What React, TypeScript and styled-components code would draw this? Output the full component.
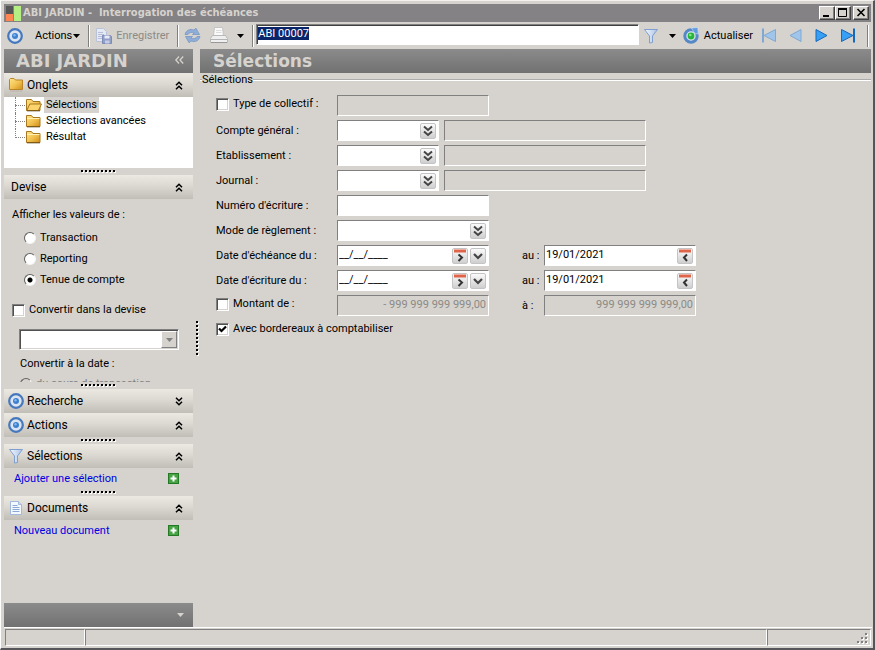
import React, { useEffect, useRef } from "react";
import styled, { createGlobalStyle, css } from "styled-components";

const face = "#d6d3ce";
const shadow = "#808080";
const uiFont = `"Roboto", "Liberation Sans", sans-serif`;
const titleFont = `"DejaVu Sans", Verdana, sans-serif`;
const captionFont = `"DejaVu Sans Condensed", "DejaVu Sans", sans-serif`;

const GlobalStyle = createGlobalStyle`
  *, *::before, *::after { box-sizing: border-box; }
  body { margin: 0; background: ${face}; }
  body, button, input, select {
    font-family: ${uiFont};
    font-size: 11px;
    line-height: 14px;
    color: #000;
  }
  button { border: 0; background: none; padding: 0; }
`;

const Window = styled.div`
  display: flex;
  flex-direction: column;
  height: 100vh;
  min-height: 600px;
  padding: 2px 1px 1px 2px;
  background: ${face};
  border: solid;
  border-width: 1px 2px 2px 1px;
  border-color: #f4f2ee #55555a #55555a #fff;
  overflow: hidden;
`;

const TitleBar = styled.header`
  display: flex;
  align-items: center;
  flex: none;
  height: 18px;
  margin: 1px 1px 0;
  padding-right: 2px;
  background: #848284;
  color: ${face};
`;

const WindowTitle = styled.h1`
  flex: 1;
  margin: 0 0 0 2px;
  font: bold 11px/16px ${captionFont};
  white-space: pre;
`;

const CaptionButton = styled.button<{ $gap?: boolean }>`
  display: flex;
  width: 16px;
  height: 14px;
  margin-left: ${(p) => (p.$gap ? "2px" : "0")};
  background: ${face};
  border: 1px solid;
  border-color: #fff #404040 #404040 #fff;
  box-shadow: inset -1px -1px ${shadow};
`;

const Toolbar = styled.div`
  display: flex;
  align-items: center;
  flex: none;
  height: 27px;
  padding: 0 3px 0 4px;
`;

const ToolButton = styled.button<{ $left?: number; $gap?: number }>`
  display: flex;
  align-items: center;
  flex: none;
  gap: ${(p) => p.$gap ?? 4}px;
  margin-left: ${(p) => p.$left ?? 0}px;
  &:disabled { color: #8c8a86; }
`;

const Separator = styled.span<{ $left?: number }>`
  flex: none;
  width: 2px;
  height: 22px;
  margin-left: ${(p) => p.$left ?? 8}px;
  border-left: 1px solid ${shadow};
  border-right: 1px solid #fff;
`;

const sunken = css`
  border: 1px solid;
  border-color: ${shadow} #fff #fff ${shadow};
`;

const SearchInput = styled.input`
  flex: 1;
  min-width: 0;
  height: 21px;
  margin: 0 4px 2px 2px;
  padding: 0 1px 3px;
  ${sunken}
  box-shadow: inset 1px 1px #404040;
  border-radius: 0;
  outline: 0;
  background: #fff;
  &::selection { background: #0a246a; color: #fff; }
`;

const Body = styled.div`
  display: flex;
  flex: 1;
  min-height: 0;
`;

const Sidebar = styled.aside`
  display: flex;
  flex-direction: column;
  flex: none;
  width: 190px;
  padding-left: 1px;
`;

const Grip = styled.div`
  display: flex;
  align-items: center;
  justify-content: flex-end;
  flex: none;
  width: 7px;
  padding-right: 1px;
`;

const Banner = styled.div<{ $start: number }>`
  display: flex;
  align-items: center;
  justify-content: space-between;
  flex: none;
  height: 24px;
  padding: 0 9px 0 ${(p) => p.$start}px;
  background: linear-gradient(#8b8b8b, #717171);
  color: ${face};
`;

const BannerTitle = styled.h2<{ $small?: boolean }>`
  margin: 0;
  font: bold ${(p) => (p.$small ? 17 : 18)}px/24px ${titleFont};
`;

const PanelHead = styled.button`
  display: flex;
  align-items: center;
  flex: none;
  gap: 3px;
  width: 100%;
  height: 24px;
  padding: 0 10px 0 4px;
  background: linear-gradient(#ece8e2, #dcd8d2 45%, #c1bdb7);
  font-size: 12px;
  text-align: left;
`;

const PanelName = styled.span<{ $indent?: boolean }>`
  flex: 1;
  padding-left: ${(p) => (p.$indent ? "3px" : "0")};
`;

const Splitter = styled.div`
  display: flex;
  align-items: center;
  justify-content: center;
  flex: none;
  height: 7px;
`;

const Tree = styled.ul`
  flex: none;
  height: 71px;
  margin: 0;
  padding: 0 0 0 11px;
  list-style: none;
  background: #fff;
`;

const TreeItem = styled.li<{ $last?: boolean }>`
  position: relative;
  height: 16px;
  padding-left: 11px;
  &::before {
    content: "";
    position: absolute;
    left: 0;
    top: 0;
    height: ${(p) => (p.$last ? "9px" : "16px")};
    border-left: 1px dotted ${shadow};
  }
  &::after {
    content: "";
    position: absolute;
    left: 0;
    top: 8px;
    width: 10px;
    border-top: 1px dotted ${shadow};
  }
`;

const TreeLink = styled.a<{ $active?: boolean }>`
  display: flex;
  align-items: center;
  gap: 2px;
  color: #000;
  text-decoration: none;
  span {
    padding: 1px 2px;
    background: ${(p) => (p.$active ? face : "none")};
  }
`;

const CurrencyPanel = styled.div`
  display: flex;
  flex-direction: column;
  flex: none;
  height: 183px;
  padding: 9px 14px 0 8px;
  overflow: hidden;
`;

const Options = styled.div`
  display: flex;
  flex-direction: column;
  gap: 7px;
  padding: 9px 0 16px 12px;
`;

const Choice = styled.label<{ $muted?: boolean }>`
  display: flex;
  align-items: center;
  gap: 4px;
  white-space: nowrap;
  color: ${(p) => (p.$muted ? shadow : "#000")};
`;

const Radio = styled.input.attrs({ type: "radio" })`
  appearance: none;
  flex: none;
  width: 12px;
  height: 12px;
  margin: 0;
  border: 1px solid;
  border-color: #606060 #f4f4f4 #f4f4f4 #606060;
  border-radius: 50%;
  background: #fff;
  &:checked { background: radial-gradient(circle, #000 2px, #fff 3px); }
  &:disabled { background: ${face}; }
`;

const CheckWrap = styled.span`
  display: inline-grid;
  flex: none;
  > * { grid-area: 1 / 1; }
  svg { pointer-events: none; visibility: hidden; }
  input:checked + svg { visibility: visible; }
`;

const CheckBox = styled.input.attrs({ type: "checkbox" })`
  appearance: none;
  width: 13px;
  height: 13px;
  margin: 0;
  background: #fff;
  ${sunken}
  box-shadow: inset 1px 1px #505050, inset -1px -1px ${face};
`;

const CurrencyBox = styled.div`
  display: grid;
  flex: none;
  height: 21px;
  margin: 12px 0 7px 7px;
  > * { grid-area: 1 / 1; }
`;

const CurrencySelect = styled.select`
  appearance: none;
  width: 100%;
  padding: 0 20px 0 3px;
  ${sunken}
  border-radius: 0;
  box-shadow: inset 1px 1px #505050, inset -1px -1px ${face};
  background: #fff;
`;

const DropFace = styled.span`
  display: grid;
  place-items: center;
  justify-self: end;
  width: 16px;
  margin: 2px;
  background: ${face};
  border: 1px solid;
  border-color: #fff ${shadow} ${shadow} #fff;
  pointer-events: none;
`;

const SubLabel = styled.div`
  padding: 0 0 6px 8px;
`;

const LinkRow = styled.div`
  display: flex;
  align-items: center;
  justify-content: space-between;
  flex: none;
  height: 21px;
  padding: 0 14px 0 10px;
  a { color: #0000e0; text-decoration: none; }
`;

const Fill = styled.div`
  flex: 1;
`;

const Main = styled.main`
  flex: 1;
  min-width: 0;
  padding-right: 1px;
  overflow: hidden;
`;

const FormGroup = styled.fieldset`
  display: block;
  min-width: 0;
  margin: 0;
  padding: 8px 0 0 16px;
  border: 0;
  border-top: 2px groove #fff;
  legend {
    margin-left: -14px;
    padding: 0;
  }
`;

const Rows = styled.div`
  display: flex;
  flex-direction: column;
  gap: 4px;
`;

const Row = styled.div`
  display: flex;
  align-items: center;
  height: 21px;
`;

const RowLabel = styled.div<{ $tick?: boolean }>`
  flex: none;
  width: 121px;
  padding-top: ${(p) => (p.$tick ? "0" : "1px")};
  padding-bottom: ${(p) => (p.$tick ? "3px" : "0")};
  white-space: nowrap;
`;

const ToLabel = styled.label`
  flex: none;
  width: 22px;
  margin-left: 33px;
  padding-top: 1px;
`;

const FieldBox = styled.div<{ $w: number; $off?: boolean; $left?: number }>`
  display: flex;
  align-items: center;
  gap: 2px;
  flex: none;
  width: ${(p) => p.$w}px;
  height: 21px;
  margin-left: ${(p) => p.$left ?? 0}px;
  padding-right: 2px;
  ${sunken}
  background: ${(p) => (p.$off ? face : "#fff")};
`;

const FieldInput = styled.input<{ $right?: boolean }>`
  flex: 1;
  min-width: 0;
  height: 19px;
  padding: 0 0 3px 1px;
  border: 0;
  outline: 0;
  background: none;
  text-align: ${(p) => (p.$right ? "right" : "left")};
  &:disabled { color: #8c8a86; }
`;

const MiniButton = styled.button`
  display: grid;
  place-items: center;
  flex: none;
  width: 16px;
  height: 16px;
  border: 1px solid #c4c4c4;
  border-radius: 2px;
  background: linear-gradient(#fafafa, #cfcfcf);
`;

const StatusBar = styled.footer`
  display: flex;
  flex: none;
  height: 20px;
  margin-left: 1px;
  padding: 1px 1px 1px 1px;
  border-top: 1px solid #fff;
`;

const StatusCell = styled.div<{ $w?: number }>`
  display: flex;
  align-items: flex-end;
  justify-content: flex-end;
  flex: ${(p) => (p.$w ? `0 0 ${p.$w}px` : "1")};
  ${sunken}
`;

const Target = () => (
  <svg width="16" height="16" viewBox="0 0 16 16" aria-hidden="true">
    <circle cx="8" cy="8" r="6.8" fill="#dbe4f0" stroke="#4578bd" strokeWidth="2.2" />
    <circle cx="8" cy="8" r="3" fill="#3c80d0" />
    <circle cx="7.5" cy="7.3" r="1.2" fill="#7fb4ee" />
  </svg>
);

const Caret = ({ color = "#000" }: { color?: string }) => (
  <svg width="7" height="4" viewBox="0 0 7 4" aria-hidden="true">
    <path d="M0 0h7L3.5 4z" fill={color} />
  </svg>
);

const DoubleChevron = ({ down = false }: { down?: boolean }) => (
  <svg width="8" height="9" viewBox="0 0 8 9" aria-hidden="true" fill="none" stroke="#000" strokeWidth="1.5">
    {down ? <path d="M1 .7l3 3 3-3M1 4.7l3 3 3-3" /> : <path d="M1 4.3l3-3 3 3M1 8.3l3-3 3 3" />}
  </svg>
);

const FolderGradient = () => (
  <linearGradient id="folderFill" x1="0" y1="0" x2="1" y2="1">
    <stop offset="0" stopColor="#ffe48a" />
    <stop offset=".5" stopColor="#f3c352" />
    <stop offset="1" stopColor="#cf8d18" />
  </linearGradient>
);

const Folder = ({ open = false }: { open?: boolean }) => (
  <svg width="16" height="14" viewBox="0 0 16 14" aria-hidden="true">
    <defs><FolderGradient /></defs>
    <path d="M.5 12.500v-11h5l1.500 2h7v9z" fill="url(#folderFill)" stroke="#a8781f" />
    {open ? (
      <path d="M.8 12.500l3-6.500h11.700l-3.200 6.500z" fill="#fbd56c" stroke="#a8781f" />
    ) : (
      <path d="M1 4.500h12.500" stroke="#fff0b8" />
    )}
    <path d="M1 12.900h13" stroke="#4c340c" strokeOpacity=".7" />
  </svg>
);

const TabFolder = () => (
  <svg width="16" height="16" viewBox="0 0 16 16" aria-hidden="true">
    <defs><FolderGradient /></defs>
    <path d="M1.500 12.500v-10l1-1H6l1.500 1.500H14.500v9.500z" fill="url(#folderFill)" stroke="#b98528" />
    <path d="M2 14h12.500" stroke="#a39a89" strokeOpacity=".5" />
  </svg>
);

const Funnel = () => (
  <svg width="16" height="16" viewBox="0 0 16 16" aria-hidden="true">
    <defs>
      <linearGradient id="funnelFill">
        <stop offset="0" stopColor="#f5f9ff" />
        <stop offset="1" stopColor="#a9c2e6" />
      </linearGradient>
    </defs>
    <path d="M1.500 1.500h13L9.500 8v6.500l-3 .5V8z" fill="url(#funnelFill)" stroke="#7f9fd0" />
  </svg>
);

const DocIcon = () => (
  <svg width="16" height="16" viewBox="0 0 16 16" aria-hidden="true">
    <path d="M2.500 1.500h8l3 3v10h-11z" fill="#f4f8ff" stroke="#a3b9dc" />
    <path d="M10.500 1.500v3h3" fill="#cbdaf2" stroke="#a3b9dc" />
    <path d="M4.500 5.500h5M4.500 7.500h7M4.500 9.500h7M4.500 11.500h7" stroke="#8ba7d6" />
  </svg>
);

const SaveIcon = () => (
  <svg width="16" height="16" viewBox="0 0 16 16" aria-hidden="true">
    <path d="M.5.5h7l3 3v10H.5z" fill="#e5e9f3" stroke="#b9c2d6" />
    <path d="M2 4.500h5M2 6.500h6M2 8.500h4M2 10.500h4" stroke="#b5c0d8" />
    <path d="M6.500 7.500h8l1 1v7h-9z" fill="#929fc8" stroke="#7d8bb9" />
    <path d="M8.500 7.500h5v3h-5z" fill="#e8ebf4" />
    <path d="M9 12.500h4.500v3H9z" fill="#c6cde2" />
  </svg>
);

const SyncIcon = () => (
  <svg width="17" height="17" viewBox="0 0 17 17" aria-hidden="true">
    <path d="M1 7.500C2 3 6 1.500 10 3L12 1.200 15.500 7.500H8.500l1.600-1.700C7.500 4.800 5 5.500 4 7.500z" fill="#8fadd6" stroke="#6f92c4" strokeWidth=".7" />
    <path d="M16 9.500c-1 4.500-5 6-9 4.500L5 15.800 1.500 9.500h7l-1.600 1.700c2.600 1 5.100.300 6.100-1.700z" fill="#8fadd6" stroke="#6f92c4" strokeWidth=".7" />
  </svg>
);

const Printer = () => (
  <svg width="18" height="17" viewBox="0 0 18 17" aria-hidden="true">
    <path d="M4.500.500h8l1 8h-10z" fill="#fafafa" stroke="#c4c4c4" />
    <path d="M6 3.500h5.500M6 5.500h5.500" stroke="#dcdcdc" />
    <path d="M2.500 8.500h13l2 3v4H.500v-4z" fill="#efefef" stroke="#b8b8b8" />
    <path d="M1 12.500h16" stroke="#b4b4b4" />
    <path d="M1 15.500h16" stroke="#989898" />
  </svg>
);

const Reload = () => (
  <svg width="17" height="17" viewBox="0 0 17 17" aria-hidden="true">
    <circle cx="8" cy="9" r="6.200" fill="#dde6ee" stroke="#5688c6" strokeWidth="3" />
    <path d="M8.500 1L14.800.500 15.300 7 12.500 6.500 10.500 4.500z" fill="#5f9be0" stroke="#d6e4f4" strokeWidth=".6" />
    <circle cx="8" cy="9" r="3.400" fill="#25b53a" />
    <circle cx="7.300" cy="8" r="1.300" fill="#86e887" />
  </svg>
);

const NavArrow = ({ left, bar }: { left?: boolean; bar?: boolean }) => {
  const fill = left ? "#9fc5eb" : "#38a0f4";
  const edge = left ? "#80a8d2" : "#1767bb";
  return (
    <svg width={bar ? 16 : 13} height="15" viewBox={bar ? "0 0 16 15" : "0 0 13 15"} aria-hidden="true">
      {left ? (
        <path d={bar ? "M14.500 1.500v12L3 7.500z" : "M12 1.500v12l-11-6z"} fill={fill} stroke={edge} />
      ) : (
        <path d={bar ? "M1.500 1.500v12L13 7.500z" : "M1 1.500v12l11-6z"} fill={fill} stroke={edge} />
      )}
      {bar && <path d={left ? "M2 .500v14" : "M14 .500v14"} stroke={edge} strokeWidth="2" />}
    </svg>
  );
};

const AddIcon = () => (
  <svg width="11" height="11" viewBox="0 0 11 11" aria-hidden="true">
    <rect x=".5" y=".5" width="10" height="10" fill="#46a342" stroke="#247826" />
    <path d="M5.500 2.500v6M2.500 5.500h6" stroke="#fff" strokeWidth="2" />
  </svg>
);

const Dots = ({ vertical = false }: { vertical?: boolean }) => (
  <svg width={vertical ? 3 : 35} height={vertical ? 35 : 3} aria-hidden="true">
    {Array.from({ length: 9 }, (_, i) => (
      <g key={i}>
        <rect x={vertical ? 1 : i * 4 + 1} y={vertical ? i * 4 + 1 : 1} width="2" height="2" fill="#fff" />
        <rect x={vertical ? 0 : i * 4} y={vertical ? i * 4 : 0} width="2" height="2" fill="#000" />
      </g>
    ))}
  </svg>
);

const PickIcon = () => (
  <svg width="12" height="12" viewBox="0 0 12 12" aria-hidden="true" fill="none" stroke="#444" strokeWidth="2">
    <path d="M2 1.500l4 3.500 4-3.500M2 6.500L6 10l4-3.500" />
  </svg>
);

const DownIcon = () => (
  <svg width="12" height="12" viewBox="0 0 12 12" aria-hidden="true" fill="none" stroke="#444" strokeWidth="2.200">
    <path d="M2 4l4 4 4-4" />
  </svg>
);

const DayIcon = ({ back = false }: { back?: boolean }) => (
  <svg width="14" height="14" viewBox="0 0 14 14" aria-hidden="true" fill="none">
    <path d="M1 2h12" stroke="#e0644a" strokeWidth="3" />
    <path d={back ? "M9 5.500L6 8.500l3 3.500" : "M5.500 5.500L9 8.500 5.500 12"} stroke="#333" strokeWidth="2" />
  </svg>
);

const Check = ({ id, on = false }: { id: string; on?: boolean }) => (
  <CheckWrap>
    <CheckBox id={id} defaultChecked={on} />
    <svg width="13" height="13" viewBox="0 0 13 13" aria-hidden="true">
      <path d="M3 5.500l2.500 2.500L10 3.500" fill="none" stroke="#000" strokeWidth="2.200" />
    </svg>
  </CheckWrap>
);

const Panel = ({ icon, name, down }: { icon?: React.ReactNode; name: string; down?: boolean }) => (
  <PanelHead type="button" aria-expanded={!down}>
    {icon}
    <PanelName $indent={!icon}>{name}</PanelName>
    <DoubleChevron down={down} />
  </PanelHead>
);

const LookupRow = ({ id, label }: { id: string; label: string }) => (
  <Row>
    <RowLabel><label htmlFor={id}>{label}</label></RowLabel>
    <FieldBox $w={102}>
      <FieldInput id={id} />
      <MiniButton type="button" aria-label="Rechercher"><PickIcon /></MiniButton>
    </FieldBox>
    <FieldBox $w={202} $left={5} $off>
      <FieldInput disabled aria-label={label} />
    </FieldBox>
  </Row>
);

const DateRow = ({ id, label }: { id: string; label: string }) => (
  <Row>
    <RowLabel><label htmlFor={id}>{label}</label></RowLabel>
    <FieldBox $w={152}>
      <FieldInput id={id} defaultValue="__/__/____" />
      <MiniButton type="button" aria-label="Jour suivant"><DayIcon /></MiniButton>
      <MiniButton type="button" aria-label="Calendrier"><DownIcon /></MiniButton>
    </FieldBox>
    <ToLabel htmlFor={`${id}-au`}>au :</ToLabel>
    <FieldBox $w={152}>
      <FieldInput id={`${id}-au`} defaultValue="19/01/2021" />
      <MiniButton type="button" aria-label="Jour précédent"><DayIcon back /></MiniButton>
    </FieldBox>
  </Row>
);

export default function App() {
  const search = useRef<HTMLInputElement>(null);
  useEffect(() => {
    search.current?.focus();
    search.current?.select();
  }, []);

  return (
    <Window>
      <GlobalStyle />
      <TitleBar>
        <svg width="17" height="17" viewBox="0 0 17 17" aria-hidden="true">
          <path d="M2 1h7v8H2z" fill="#555" />
          <path d="M2 9h7v7H2z" fill="#ff8552" />
          <path d="M10 1h7v15h-7z" fill="#b5ef84" />
        </svg>
        <WindowTitle>ABI JARDIN -  Interrogation des échéances</WindowTitle>
        <CaptionButton type="button" aria-label="Réduire">
          <svg width="14" height="12"><path d="M3 9h6" stroke="#000" strokeWidth="2" /></svg>
        </CaptionButton>
        <CaptionButton type="button" aria-label="Agrandir">
          <svg width="14" height="12"><path d="M2.500 2v7.500h8V2" fill="none" stroke="#000" /><path d="M2 2h9" stroke="#000" strokeWidth="2" /></svg>
        </CaptionButton>
        <CaptionButton type="button" aria-label="Fermer" $gap>
          <svg width="14" height="12"><path d="M3.500 2l7 7M10.500 2l-7 7" stroke="#000" strokeWidth="1.600" /></svg>
        </CaptionButton>
      </TitleBar>

      <Toolbar>
        <ToolButton type="button" aria-label="Menu"><Target /></ToolButton>
        <ToolButton type="button" $left={12} $gap={1}>Actions<Caret /></ToolButton>
        <Separator />
        <ToolButton type="button" disabled $left={6}><SaveIcon />Enregistrer</ToolButton>
        <Separator />
        <ToolButton type="button" aria-label="Synchroniser" $left={5}><SyncIcon /></ToolButton>
        <ToolButton type="button" aria-label="Imprimer" $left={9} $gap={9}><Printer /><Caret /></ToolButton>
        <Separator />
        <SearchInput ref={search} defaultValue="ABI 00007" aria-label="Compte" />
        <ToolButton type="button" aria-label="Filtrer" $gap={10}><Funnel /><Caret /></ToolButton>
        <ToolButton type="button" $left={7}><Reload />Actualiser</ToolButton>
        <ToolButton type="button" aria-label="Premier" $left={8}><NavArrow left bar /></ToolButton>
        <ToolButton type="button" aria-label="Précédent" $left={12}><NavArrow left /></ToolButton>
        <ToolButton type="button" aria-label="Suivant" $left={13}><NavArrow /></ToolButton>
        <ToolButton type="button" aria-label="Dernier" $left={12}><NavArrow bar /></ToolButton>
        <Separator $left={11} />
      </Toolbar>

      <Body>
        <Sidebar>
          <Banner $start={12}>
            <BannerTitle>ABI JARDIN</BannerTitle>
            <button type="button" aria-label="Replier">
              <svg width="9" height="8" viewBox="0 0 9 8" fill="none" stroke={face} strokeWidth="1.300">
                <path d="M4 .500L.800 4 4 7.500M8.200.500L5 4l3.200 3.500" />
              </svg>
            </button>
          </Banner>

          <Panel icon={<TabFolder />} name="Onglets" />
          <Tree>
            <TreeItem><TreeLink href="#selections" $active><Folder open /><span>Sélections</span></TreeLink></TreeItem>
            <TreeItem><TreeLink href="#avancees"><Folder /><span>Sélections avancées</span></TreeLink></TreeItem>
            <TreeItem $last><TreeLink href="#resultat"><Folder /><span>Résultat</span></TreeLink></TreeItem>
          </Tree>
          <Splitter><Dots /></Splitter>

          <Panel name="Devise" />
          <CurrencyPanel>
            <div>Afficher les valeurs de :</div>
            <Options>
              <Choice><Radio name="valeurs" />Transaction</Choice>
              <Choice><Radio name="valeurs" />Reporting</Choice>
              <Choice><Radio name="valeurs" defaultChecked />Tenue de compte</Choice>
            </Options>
            <Choice htmlFor="convertir"><Check id="convertir" />Convertir dans la devise</Choice>
            <CurrencyBox>
              <CurrencySelect aria-label="Devise de conversion" />
              <DropFace><Caret color={shadow} /></DropFace>
            </CurrencyBox>
            <SubLabel>Convertir à la date :</SubLabel>
            <SubLabel>
              <Choice $muted><Radio name="date" disabled />du cours de transaction</Choice>
            </SubLabel>
          </CurrencyPanel>
          <Splitter><Dots /></Splitter>

          <Panel icon={<Target />} name="Recherche" down />
          <Panel icon={<Target />} name="Actions" />
          <Splitter><Dots /></Splitter>

          <Panel icon={<Funnel />} name="Sélections" />
          <LinkRow><a href="#ajouter">Ajouter une sélection</a><AddIcon /></LinkRow>
          <Splitter><Dots /></Splitter>

          <Panel icon={<DocIcon />} name="Documents" />
          <LinkRow><a href="#nouveau">Nouveau document</a><AddIcon /></LinkRow>
          <Fill />
          <Banner $start={12}>
            <span />
            <Caret color={face} />
          </Banner>
        </Sidebar>

        <Grip><Dots vertical /></Grip>

        <Main>
          <Banner $start={13}><BannerTitle $small>Sélections</BannerTitle></Banner>
          <FormGroup>
            <legend>Sélections</legend>
            <Rows>
              <Row>
                <RowLabel $tick><Choice htmlFor="collectif"><Check id="collectif" />Type de collectif :</Choice></RowLabel>
                <FieldBox $w={152} $off><FieldInput disabled aria-label="Type de collectif" /></FieldBox>
              </Row>
              <LookupRow id="compte" label="Compte général :" />
              <LookupRow id="etablissement" label="Etablissement :" />
              <LookupRow id="journal" label="Journal :" />
              <Row>
                <RowLabel><label htmlFor="numero">Numéro d'écriture :</label></RowLabel>
                <FieldBox $w={152}><FieldInput id="numero" /></FieldBox>
              </Row>
              <Row>
                <RowLabel><label htmlFor="reglement">Mode de règlement :</label></RowLabel>
                <FieldBox $w={152}>
                  <FieldInput id="reglement" />
                  <MiniButton type="button" aria-label="Rechercher"><PickIcon /></MiniButton>
                </FieldBox>
              </Row>
              <DateRow id="echeance" label="Date d'échéance du :" />
              <DateRow id="ecriture" label="Date d'écriture du :" />
              <Row>
                <RowLabel $tick><Choice htmlFor="montant"><Check id="montant" />Montant de :</Choice></RowLabel>
                <FieldBox $w={152} $off>
                  <FieldInput $right disabled aria-label="Montant minimum" defaultValue="- 999 999 999 999,00" />
                </FieldBox>
                <ToLabel htmlFor="montant-max">à :</ToLabel>
                <FieldBox $w={152} $off>
                  <FieldInput id="montant-max" $right disabled defaultValue="999 999 999 999,00" />
                </FieldBox>
              </Row>
              <Row>
                <RowLabel $tick><Choice htmlFor="bordereaux"><Check id="bordereaux" on />Avec bordereaux à comptabiliser</Choice></RowLabel>
              </Row>
            </Rows>
          </FormGroup>
        </Main>
      </Body>

      <StatusBar>
        <StatusCell $w={80} />
        <StatusCell />
        <StatusCell $w={104}>
          <svg width="13" height="12" viewBox="0 0 13 12" aria-hidden="true">
            {[[8, 0], [4, 4], [8, 4], [0, 8], [4, 8], [8, 8]].map(([x, y]) => (
              <g key={`${x}-${y}`}>
                <rect x={x + 1} y={y + 1} width="2" height="2" fill="#fff" />
                <rect x={x} y={y} width="2" height="2" fill={shadow} />
              </g>
            ))}
          </svg>
        </StatusCell>
      </StatusBar>
    </Window>
  );
}
